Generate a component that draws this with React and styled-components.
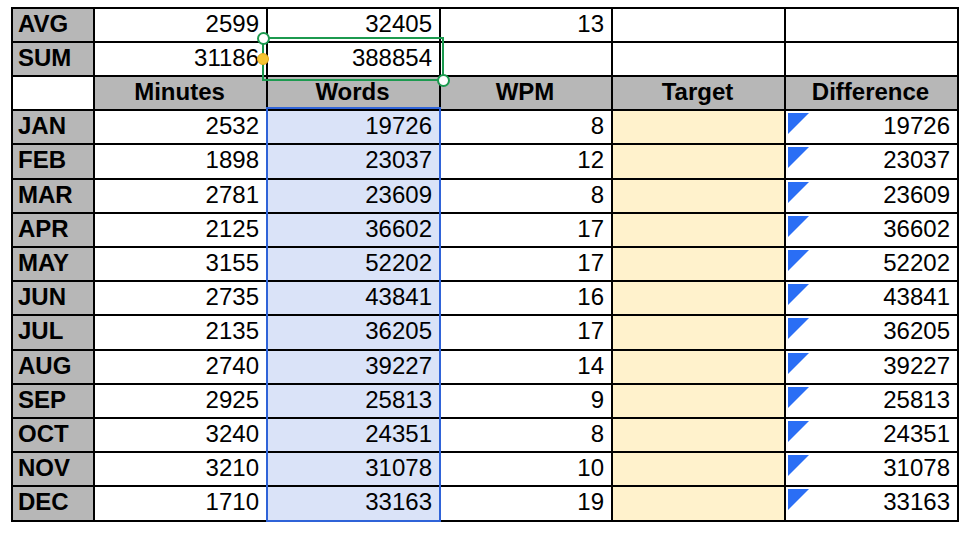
import React from "react";
import styled, { createGlobalStyle } from "styled-components";

const Global = createGlobalStyle`
  html, body { margin: 0; padding: 0; background: #ffffff; }
  body { font-family: "Liberation Sans", Arial, sans-serif; }
  #root { padding: 7px 0 0 11px; }
`;

const Sheet = styled.div`
  position: relative;
  display: inline-grid;
  grid-template-columns: 80px 171px 171px 170px 171px 171px;
  grid-auto-rows: 32px 32px 32px 32px 33px;
  gap: 2px;
  padding: 2px;
  background: #000000;
`;

const fills = {
  white: "#ffffff",
  gray: "#b7b7b7",
  blue: "#dae3f8",
  yellow: "#fff2cc",
};

const Cell = styled.div`
  display: flex;
  align-items: center;
  justify-content: ${(p) =>
    p.$align === "left" ? "flex-start" : p.$align === "center" ? "center" : "flex-end"};
  padding: 0 7px 3px 5px;
  background: ${(p) => fills[p.$fill || "white"]};
  font-size: 24px;
  line-height: 24px;
  font-weight: ${(p) => (p.$bold ? 700 : 400)};
  color: #000000;
  white-space: nowrap;
  overflow: hidden;
`;

const DiffCell = styled(Cell)`
  align-items: stretch;
  padding: 0;
`;

const Flag = styled.span`
  align-self: flex-start;
  width: 21px;
  height: 21px;
  margin: 2px 0 0 2px;
  flex: none;
  background: #2a6ef5;
  clip-path: polygon(0 0, 100% 0, 0 100%);
`;

const DiffValue = styled.span`
  margin-left: auto;
  display: flex;
  align-items: center;
  padding: 0 7px 3px 0;
`;

const ColumnOutline = styled.div`
  position: absolute;
  left: 255px;
  top: 100px;
  width: 175px;
  height: 415px;
  box-sizing: border-box;
  border: 2px solid #2f63d8;
  pointer-events: none;
`;

const Selection = styled.div`
  position: absolute;
  left: 251px;
  top: 30px;
  width: 182px;
  height: 44px;
  box-sizing: border-box;
  border: 2px solid #1c9a4f;
  pointer-events: none;
`;

const Handle = styled.span`
  position: absolute;
  width: 13px;
  height: 13px;
  box-sizing: border-box;
  border-radius: 50%;
  border: 2px solid #1c9a4f;
  background: #ffffff;
  left: ${(p) => p.$x - 6.5}px;
  top: ${(p) => p.$y - 6.5}px;
`;

const Dot = styled.span`
  position: absolute;
  width: 12px;
  height: 12px;
  border-radius: 50%;
  background: #f5c431;
  border: 1px solid #e0a91c;
  box-sizing: border-box;
  left: ${(p) => p.$x - 6}px;
  top: ${(p) => p.$y - 6}px;
`;

const months = [
  ["JAN", 2532, 19726, 8],
  ["FEB", 1898, 23037, 12],
  ["MAR", 2781, 23609, 8],
  ["APR", 2125, 36602, 17],
  ["MAY", 3155, 52202, 17],
  ["JUN", 2735, 43841, 16],
  ["JUL", 2135, 36205, 17],
  ["AUG", 2740, 39227, 14],
  ["SEP", 2925, 25813, 9],
  ["OCT", 3240, 24351, 8],
  ["NOV", 3210, 31078, 10],
  ["DEC", 1710, 33163, 19],
];

const headers = ["Minutes", "Words", "WPM", "Target", "Difference"];

export default function App() {
  return (
    <>
      <Global />
      <Sheet>
        <Cell $fill="gray" $bold $align="left">AVG</Cell>
        <Cell>2599</Cell>
        <Cell>32405</Cell>
        <Cell>13</Cell>
        <Cell />
        <Cell />

        <Cell $fill="gray" $bold $align="left">SUM</Cell>
        <Cell>31186</Cell>
        <Cell>388854</Cell>
        <Cell />
        <Cell />
        <Cell />

        <Cell />
        {headers.map((h) => (
          <Cell key={h} $fill="gray" $bold $align="center">{h}</Cell>
        ))}

        {months.map(([m, min, words, wpm]) => (
          <React.Fragment key={m}>
            <Cell $fill="gray" $bold $align="left">{m}</Cell>
            <Cell>{min}</Cell>
            <Cell $fill="blue">{words}</Cell>
            <Cell>{wpm}</Cell>
            <Cell $fill="yellow" />
            <DiffCell>
              <Flag />
              <DiffValue>{words}</DiffValue>
            </DiffCell>
          </React.Fragment>
        ))}

        <ColumnOutline />
        <Selection />
        <Handle $x={252} $y={31} />
        <Handle $x={432} $y={73} />
        <Dot $x={252} $y={52} />
      </Sheet>
    </>
  );
}
